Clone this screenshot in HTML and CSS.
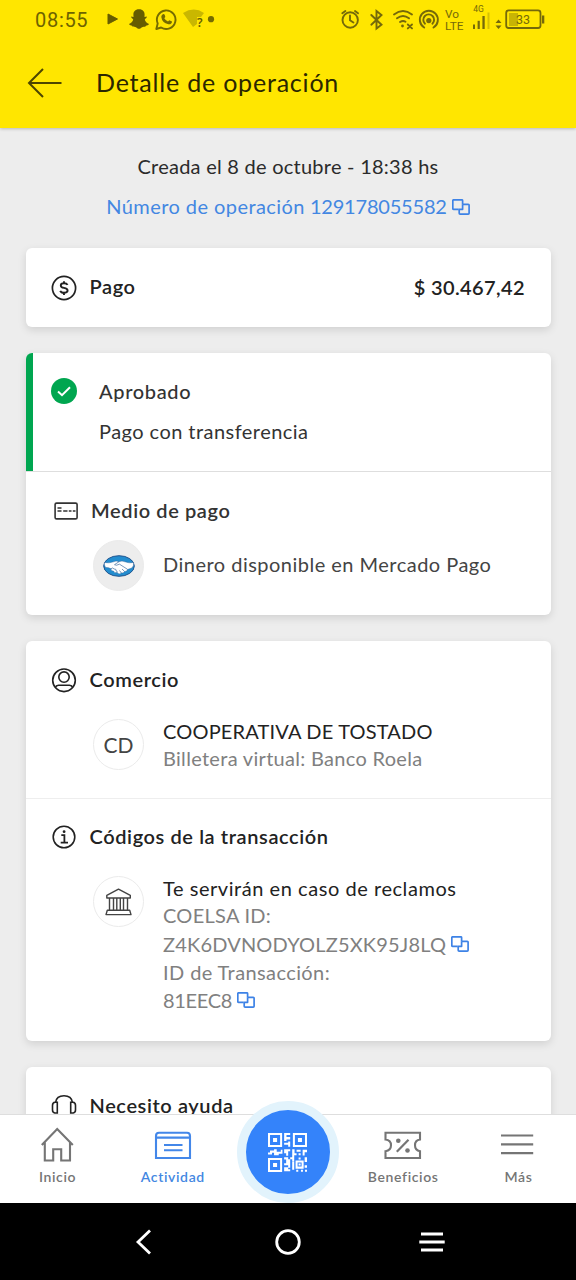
FILE: index.html
```html
<!DOCTYPE html>
<html lang="es">
<head>
<meta charset="utf-8">
<title>Detalle de operación</title>
<link rel="stylesheet" href="styles.css">
</head>
<body>
<svg class="defs" width="0" height="0" aria-hidden="true">
  <symbol id="copy" viewBox="0 0 18 16"><g fill="none" stroke="#3d82e6" stroke-width="1.7" stroke-linejoin="round"><path d="M6.6 10.3H1.6Q.8 10.3.8 9.5V1.6Q.8.8 1.6.8H9.8Q10.6.8 10.6 1.6V5.3"/><path d="M10.6 5.3V10.3H6.6"/><path d="M10.6 5.3H16.2Q17.1 5.3 17.1 6.1V14.3Q17.1 15.1 16.2 15.1H8.1Q7.2 15.1 7.2 14.3V10.3"/></g></symbol>
</svg>
<div class="screen">
  <header class="top">
    <div class="status">
      <span class="clock">08:55</span>
      <svg class="status-left" viewBox="0 0 110 24" width="110" height="24">
        <path d="M2 8V18L11.5 13Z" fill="#665c00" stroke="#665c00"/>
        <path d="M33 3.2C29 3.2 27.3 5.8 27.4 8.6L27.5 11L25.2 10.6C24.9 12 26.8 12.6 27.2 13.5C26.8 15.6 25 17.3 23 18C23.4 19.3 25.2 19.4 26 19.8C26.5 21.1 27.8 20.7 29.3 20.9C30.8 21.3 31.3 22.8 33 22.8C34.7 22.8 35.2 21.3 36.7 20.9C38.2 20.7 39.5 21.1 40 19.8C40.8 19.4 42.6 19.3 43 18C41 17.3 39.2 15.6 38.8 13.5C39.2 12.6 41.1 12 40.8 10.6L38.5 11L38.6 8.6C38.7 5.8 37 3.2 33 3.2Z" fill="#665c00"/>
        <path d="M50.3 23L51.7 17.5A9.3 9.3 0 1 1 55.1 21.5Z" fill="none" stroke="#756b00" stroke-width="1.9" stroke-linejoin="round"/>
        <path d="M56.2 8.8Q57.7 7.2 58.8 8.9L59.3 11L58.3 12.3Q59.7 14.7 62 15.6L63.3 14.2L66 15.5Q66 18.5 62.4 18.3Q56 16.8 55.3 11Q55.3 9.5 56.2 8.8Z" fill="#756b00"/>
        <path d="M77 7Q88 .2 98 7L95 11H91V18L87 21Z" fill="#c9b700"/>
        <text x="91" y="20.5" class="wifi-q">?</text>
        <circle cx="105" cy="13.2" r="3.1" fill="#756b00"/>
      </svg>
      <svg class="status-right" viewBox="0 0 206 32" width="206" height="32">
        <g fill="none" stroke="#75690a" stroke-width="1.9" stroke-linecap="round">
          <circle cx="10.2" cy="20" r="7.7"/><path d="M10 15.5V20.3L13.4 22.5M2.3 13.3L5.4 11M18 13.3L15 11"/>
          <path d="M31.3 15L41.5 24.7L36.5 28.5V11L41.5 15L31.3 24.7"/>
          <path d="M54 14.5Q63 7.5 72 14.5M57 18.3Q63 13.7 69 18.3M60 22Q63 20 65.5 21.7"/>
          <path d="M67.8 24.5L72 28.4M72 24.5L67.8 28.4"/>
          <path d="M84.2 27.5A9 9 0 1 1 93.5 27.5"/><path d="M85 23.7A5.4 5.4 0 1 1 92.4 23.7"/>
        </g>
        <circle cx="62.5" cy="26" r="1.4" fill="#75690a"/><circle cx="88.8" cy="20.6" r="2.6" fill="#75690a"/>
        <text x="105" y="17.8" class="volte">Vo</text><text x="105" y="30" class="volte">LTE</text>
        <text x="133.3" y="12.2" class="fourg">4G</text>
        <g fill="#75690a"><rect x="133" y="24.5" width="2" height="4.5"/><rect x="137.6" y="20.8" width="2.2" height="8.2"/><rect x="142.4" y="16" width="2.3" height="13"/><rect x="147.5" y="12.5" width="2" height="16.5" opacity=".3"/>
        <path d="M158.5 19.5L161.5 23H155.5ZM158.5 29L155.5 25.5H161.5Z"/><rect x="202" y="15.5" width="2.3" height="8"/><rect x="169" y="13" width="9" height="13" opacity=".4"/></g>
        <rect x="166.2" y="10.4" width="34.3" height="17.6" rx="2.5" fill="none" stroke="#75690a" stroke-width="1.8"/>
        <text x="183" y="24.2" class="battery" text-anchor="middle">33</text>
      </svg>
    </div>
    <div class="appbar">
      <svg class="back" viewBox="0 0 36 32" width="36" height="32"><path d="M17 2L3 16L17 30M3 16H35.5" fill="none" stroke="#4d4600" stroke-width="2"/></svg>
      <h1 class="title">Detalle de operación</h1>
    </div>
  </header>

  <main class="content">
    <div class="meta">
      <span class="created">Creada el 8 de octubre - 18:38 hs</span>
      <span class="opnum"><span class="opnum-label">Número de operación</span><span class="opnum-value">129178055582</span><svg class="copy"><use href="#copy"/></svg></span>
    </div>

    <section class="card pay">
      <svg class="ico" viewBox="0 0 26 26"><circle cx="13" cy="13" r="11.6" fill="none" stroke="#222" stroke-width="1.7"/><path d="M16.6 9.9Q15.7 8.3 13 8.3Q9.8 8.3 9.8 10.5Q9.8 12.4 13 12.9Q16.6 13.4 16.6 15.6Q16.6 17.8 13 17.8Q10.1 17.8 9.2 15.8M13 6.2V8.3M13 17.8V20" fill="none" stroke="#222" stroke-width="1.9"/></svg>
      <h2 class="heading">Pago</h2>
      <span class="amount">$ 30.467,42</span>
    </section>

    <section class="card">
      <div class="approved">
        <svg class="ico" viewBox="0 0 26 26"><circle cx="13" cy="13" r="13" fill="#00a650"/><path d="M7 13.5L11 17.2L19 9.2" fill="none" stroke="#fff" stroke-width="2"/></svg>
        <div>
          <h2 class="state">Aprobado</h2>
          <p class="kind">Pago con transferencia</p>
        </div>
      </div>
      <div class="block method">
        <div class="block-head">
          <svg class="ico card-ico" viewBox="0 0 26 26"><g fill="none" stroke="#333" stroke-width="1.6"><rect x="2.1" y="5.1" width="22" height="15.8" rx="1.5"/><path d="M4.5 10H8.5M4.5 13H8.5M10.2 13H14.5M15.8 13H18.5M19.8 13H22.5" stroke-width="1.4"/></g></svg>
          <h2 class="heading">Medio de pago</h2>
        </div>
        <div class="row">
          <span class="avatar filled">
            <svg viewBox="0 0 32 22" width="32" height="22"><ellipse cx="16" cy="11" rx="15.3" ry="10.3" fill="#238dcf" stroke="#22558f" stroke-width="1"/><path d="M1.4 7.5Q6 8.5 10.5 6.8Q13 5.5 16 6.7Q19 5.5 22 6.8Q26 8.5 30.6 7.5Q31 11 28.8 13L24.5 14.5Q23.8 17 21.5 16.5Q20.5 18.5 18.3 18Q16 20 14 17.6Q11.5 18.5 10.5 16Q7.8 16 8 13.7Q4.5 12 2.6 12.6Q.9 10 1.4 7.5Z" fill="#fff" stroke="#22558f" stroke-width=".4"/><path d="M16 6.7L11.5 9.7Q13 11 16.5 9.2L24.5 14.3M19 14L21.5 16.4M16.5 15.5L18.4 18M8 13.7Q10 12 11 14Q13.4 13.6 13.2 16Q14.7 16 14 17.6" fill="none" stroke="#22558f" stroke-width=".6"/></svg>
          </span>
          <span class="money">Dinero disponible en Mercado Pago</span>
        </div>
      </div>
    </section>

    <section class="card">
      <div class="block shop">
        <div class="block-head">
          <svg class="ico" viewBox="0 0 26 26"><g fill="none" stroke="#222" stroke-width="1.6"><circle cx="13" cy="13.3" r="11.3"/><circle cx="13" cy="10.1" r="5.2"/><path d="M4.5 20.6Q5 18.5 7.5 18.3H18.5Q21 18.5 21.5 20.6"/></g></svg>
          <h2 class="heading">Comercio</h2>
        </div>
        <div class="row">
          <span class="avatar initials">CD</span>
          <div class="lines"><span class="name caps">COOPERATIVA DE TOSTADO</span><span class="sub bank">Billetera virtual: Banco Roela</span></div>
        </div>
      </div>
      <div class="block codes">
        <div class="block-head">
          <svg class="ico" viewBox="0 0 26 26"><circle cx="13" cy="13" r="10.8" fill="none" stroke="#222" stroke-width="1.6"/><path d="M10.3 11.2H13.4V18.7M9.7 18.7H17" fill="none" stroke="#222" stroke-width="1.8"/><circle cx="13.1" cy="7.7" r="1.4" fill="#222"/></svg>
          <h2 class="heading">Códigos de la transacción</h2>
        </div>
        <div class="row">
          <span class="avatar"><svg viewBox="0 0 28 28" width="28" height="28"><g fill="none" stroke="#444" stroke-width="1.4" stroke-linejoin="round"><path d="M1.8 7.3L13.5 1.2L25.3 7.3V10H1.8ZM4.5 10V22.3M8.5 10V22.3M11.8 10V22.3M15.3 10V22.3M18.5 10V22.3M22.5 10V22.3M2.3 22.3H24.7L26 26.6H1Z"/></g></svg></span>
          <div class="lines">
            <span class="name">Te servirán en caso de reclamos</span>
            <span class="sub key">COELSA ID:</span>
            <span class="sub code">Z4K6DVNODYOLZ5XK95J8LQ<svg class="copy"><use href="#copy"/></svg></span>
            <span class="sub trans">ID de Transacción:</span>
            <span class="sub short">81EEC8<svg class="copy"><use href="#copy"/></svg></span>
          </div>
        </div>
      </div>
    </section>

    <section class="card help">
      <svg class="ico" viewBox="0 0 26 26"><g fill="none" stroke="#222" stroke-width="1.6"><path d="M4.5 8.5Q5.5 1.8 13 1.8Q20.5 1.8 21.5 8.5M6.3 8.3V19H3.8Q1.5 18.5 1.5 16V11.5Q1.5 8.5 4 8.3ZM19.7 8.3V19H22.2Q24.5 18.5 24.5 16V11.5Q24.5 8.5 22 8.3Z"/></g></svg>
      <h2 class="heading">Necesito ayuda</h2>
    </section>
  </main>

  <nav class="tabs">
    <a class="tab"><svg viewBox="0 0 36 36" width="36" height="36"><path d="M1.8 18L17.2 2L32.8 18M4.8 15V33.5H13.2V22.2H21.2V33.5H30V15" fill="none" stroke="#757575" stroke-width="2.1"/></svg><span>Inicio</span></a>
    <a class="tab active"><svg viewBox="0 0 38 36" width="38" height="36"><g fill="none" stroke="#4387e9" stroke-width="2.1"><path d="M2 31V9Q2 5.7 5 5.7H33Q36 5.7 36 9V31ZM2 10.6H36M10 18H28.5M10 23.2H28.5"/></g></svg><span>Actividad</span></a>
    <a class="tab scan">
      <span class="scan-button">
        <svg viewBox="0 0 116 116" width="39" height="39"><g fill="none" stroke="#fff" stroke-width="6"><path d="M3 3H39V39H3ZM77 3H113V39H77ZM3 77H39V113H3ZM85 85H103V103H85Z"/></g><g fill="#fff"><path d="M15 15h12v12h-12zM89 15h12v12h-12zM15 89h12v12h-12zM91 91h6v6h-6z"/><path d="M48 0h18v6h-11v6h11v7h-11v5h-7zM60 25h6v16h-6v-6h-12v-6h12zM0 58h6v6h-6zM6 52h12v7h-6v5h-6zM18 48h8v8h12v-6h5v12h-11v4h-14zM48 48h18v6h-6v14h-6v-8h-6zM72 48h7v12h6v6h-13zM85 50h12v6h-12zM91 60h6v6h-6zM103 50h13v7h-7v10h-6zM48 72h12v6h6v6h-12v-5h-6zM66 72h6v-6h6v18h-6v-6h-6zM48 90h6v-6h12v19h-6v-7h-12zM48 102h12v6h6v6h-18zM72 85h6v24h-6zM109 72h7v14h-7zM91 73h6v6h-6zM109 96h7v7h-7zM84 109h6v6h-6zM98 109h6v6h-6zM110 109h6v6h-6z"/></g></svg>
      </span>
    </a>
    <a class="tab"><svg viewBox="0 0 38 36" width="38" height="36"><path d="M1.5 5.7H36V12.5Q31 13 31 18.3Q31 23.5 36 24.2V31H1.5V24.2Q7 23.5 7 18.3Q7 13 1.5 12.5Z" fill="none" stroke="#757575" stroke-width="2.1"/><path d="M12.8 24.7L24.5 12.7" stroke="#757575" stroke-width="2.2"/><circle cx="14.3" cy="13.7" r="2.3" fill="#757575"/><circle cx="23.5" cy="23.5" r="2.3" fill="#757575"/></svg><span>Beneficios</span></a>
    <a class="tab"><svg viewBox="0 0 36 36" width="36" height="36"><path d="M1 8.5H33.2M1 17.3H33.2M1 26.2H33.2" stroke="#757575" stroke-width="2.2"/></svg><span>Más</span></a>
  </nav>

  <footer class="sysnav">
    <svg viewBox="0 0 28 28" width="28" height="28"><path d="M20 2.5L8 14L20 25.5" fill="none" stroke="#fff" stroke-width="2.8"/></svg>
    <svg viewBox="0 0 28 28" width="28" height="28"><circle cx="14" cy="14" r="11.3" fill="none" stroke="#fff" stroke-width="2.8"/></svg>
    <svg viewBox="0 0 28 28" width="28" height="28"><path d="M3 6H25M1.3 14H26.7M3 22H25" stroke="#fff" stroke-width="2.8"/></svg>
  </footer>
</div>
</body>
</html>
```
FILE: styles.css
```css
* { box-sizing: border-box; }
body { margin: 0; font-family: Lato, "Open Sans", sans-serif; color: #222; }
h1, h2, p { margin: 0; font-weight: 400; }
span, h1, h2, p { white-space: nowrap; }
svg { display: block; flex: none; }
.defs { position: absolute; }
.screen { width: 576px; height: 1280px; display: flex; flex-direction: column; overflow: hidden; background: #ededed; }

.top { height: 128px; flex: none; background: #ffe600; box-shadow: 0 1px 3px rgba(0,0,0,.22); z-index: 1; }
.status { height: 40px; display: flex; align-items: flex-start; }
.clock { width: 70px; margin-left: 35px; padding-top: 8px; font: 400 20px/24px Roboto, sans-serif; color: #6d6300; letter-spacing: .7px; }
.status-left { margin: 6px 0 0 1px; overflow: visible; }
.status-right { margin: 0 0 0 124px; }
.wifi-q { font: 600 12px "Noto Sans", sans-serif; fill: #665c00; }
.volte { font: 400 11.8px Roboto, sans-serif; fill: #75690a; }
.fourg { font: 400 8.5px Roboto, sans-serif; fill: #75690a; }
.battery { font: 400 12.5px Roboto, sans-serif; fill: #75690a; }
.appbar { height: 86px; display: flex; align-items: center; padding-left: 26px; }
.title { margin: -2px 0 0 34px; font-size: 25px; line-height: 32px; letter-spacing: .8px; color: #2b2700; }

.content { flex: 1; min-height: 0; overflow: hidden; padding: 18px 25.5px 0; display: flex; flex-direction: column; gap: 26px; }
.meta { height: 76px; flex: none; display: flex; flex-direction: column; align-items: center; }
.created, .opnum { font-size: 20px; line-height: 41px; }
.created { letter-spacing: .25px; color: #2b2b2b; }
.opnum { display: flex; align-items: center; color: #4387e2; margin-top: -1px; }
.opnum-label { letter-spacing: .43px; margin-right: 5px; }
.opnum-value { letter-spacing: -.2px; }
.copy { width: 18px; height: 16px; margin-left: 5px; }
.card { flex: none; background: #fff; border-radius: 6px; box-shadow: 0 3px 8px rgba(0,0,0,.12); }
.ico { width: 26px; height: 26px; }
.heading { font-size: 20px; line-height: 26px; font-weight: 600; letter-spacing: .6px; margin: -3px 0 0 12.5px; }
.pay { height: 79px; display: flex; align-items: center; padding: 0 25.5px; }
.amount { margin: -2px 0 0 auto; font-size: 20px; font-weight: 600; line-height: 26px; letter-spacing: .38px; }

.approved { height: 118px; display: flex; gap: 22px; padding: 25px 0 0 18.5px; border-left: 7px solid #00a650; border-radius: 6px 0 0 0; }
.state { font-size: 20px; font-weight: 500; line-height: 28px; letter-spacing: .65px; margin-top: -1px; color: #333; }
.kind { font-size: 20px; line-height: 28px; letter-spacing: .45px; margin-top: 12px; color: #333; }
.block { padding-left: 25.5px; }
.block-head { display: flex; align-items: center; height: 26px; }
.row { display: flex; }
.avatar { width: 51px; height: 51px; flex: none; margin: 0 19px 0 42px; border-radius: 50%; border: 1px solid #ebebeb; display: flex; align-items: center; justify-content: center; }
.filled { background: #ededed; }
.initials { font-size: 21px; color: #444; }
.method { height: 144px; padding-top: 26px; border-top: 1px solid #dedede; }
.method .row { align-items: center; margin-top: 16px; }
.card-ico { margin-left: 2px; }
.method .heading { color: #333; margin-left: 12px; }
.money { font-size: 20px; letter-spacing: .48px; margin-top: -4px; color: #444; }
.shop { height: 157px; padding-top: 26px; }
.shop .row { margin-top: 26px; }
.codes .row { margin-top: 26px; }
.codes { height: 243px; padding-top: 25px; border-top: 1px solid #eee; }
.lines { display: flex; flex-direction: column; margin-top: -1px; }
.name { font-size: 20px; line-height: 27px; letter-spacing: .55px; color: #222; }
.caps { letter-spacing: .18px; }
.sub { display: flex; align-items: center; font-size: 20px; line-height: 28.2px; color: #808080; }
.bank { letter-spacing: .3px; line-height: 26px; }
.key { letter-spacing: .28px; line-height: 27.5px; }
.code { letter-spacing: .18px; }
.trans { letter-spacing: .4px; }
.short { letter-spacing: -.3px; }
.help { height: 79px; display: flex; align-items: center; padding-left: 25.5px; }

.tabs { height: 89px; flex: none; display: grid; grid-template-columns: repeat(5, 1fr); background: #fff; border-top: 1px solid #dedede; }
.tab { display: flex; flex-direction: column; align-items: center; padding-top: 12px; font-size: 14px; font-weight: 600; line-height: 18px; letter-spacing: .65px; color: #757575; }
.tab span { margin-top: 5px; }
.active { color: #4387e2; }
.scan { padding: 0; justify-content: flex-start; }
.tab .scan-button { width: 102px; height: 102px; margin-top: -14px; flex: none; border-radius: 50%; background: #3483fa; border: 9px solid #e2f3fc; display: flex; align-items: center; justify-content: center; }
.sysnav { height: 77px; flex: none; background: #000; display: flex; align-items: center; justify-content: center; gap: 116px; }
```
